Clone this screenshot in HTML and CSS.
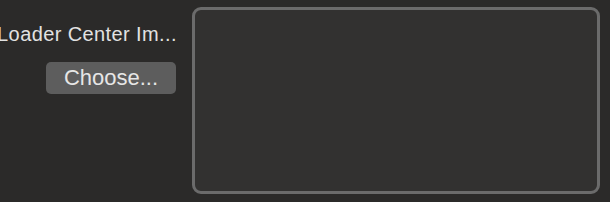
FILE: index.html
```html
<!DOCTYPE html>
<html lang="en">
<head>
	<meta charset="utf-8">
	<meta name="viewport" content="width=device-width, initial-scale=1">
	<title>Image Loader</title>
	<link rel="stylesheet" href="styles.css">
</head>
<body>
	<div class="panel">
		<!-- Left column: label and button -->
		<div class="side">
			<div class="label"><span>Image Loader Center Im...</span></div>
			<button class="choose">Choose...</button>
		</div>

		<!-- Image well -->
		<div class="well"></div>
	</div>
</body>
</html>
```

FILE: styles.css
```css
body {
	margin: 0;
	background: #2b2a29;
	font-family: "Liberation Sans", Arial, sans-serif;
	color: #e2e2e2;
}

.panel {
	display: flex;
	width: 610px;
	height: 202px;
	padding: 7px 10px 8px 0;
	box-sizing: border-box;
}

.side {
	width: 177px;
	display: flex;
	flex-direction: column;
	align-items: flex-end;
}

.label {
	width: 177px;
	display: flex;
	justify-content: flex-end;
	overflow: hidden;
	white-space: nowrap;
	font-size: 20px;
	letter-spacing: 0.4px;
	margin-top: 16px;
	line-height: 22px;
}

.choose {
	margin-top: 17px;
	margin-right: 1px;
	width: 130px;
	height: 32px;
	background: #5d5d5d;
	color: #e6e6e6;
	border: none;
	border-radius: 5px;
	font-family: "Liberation Sans", Arial, sans-serif;
	font-size: 22px;
	padding: 0 0 1px 0;
}

.well {
	margin-left: 15px;
	flex: 1;
	background: #323130;
	border: 3px solid #6b6b6b;
	border-radius: 9px;
}
```
